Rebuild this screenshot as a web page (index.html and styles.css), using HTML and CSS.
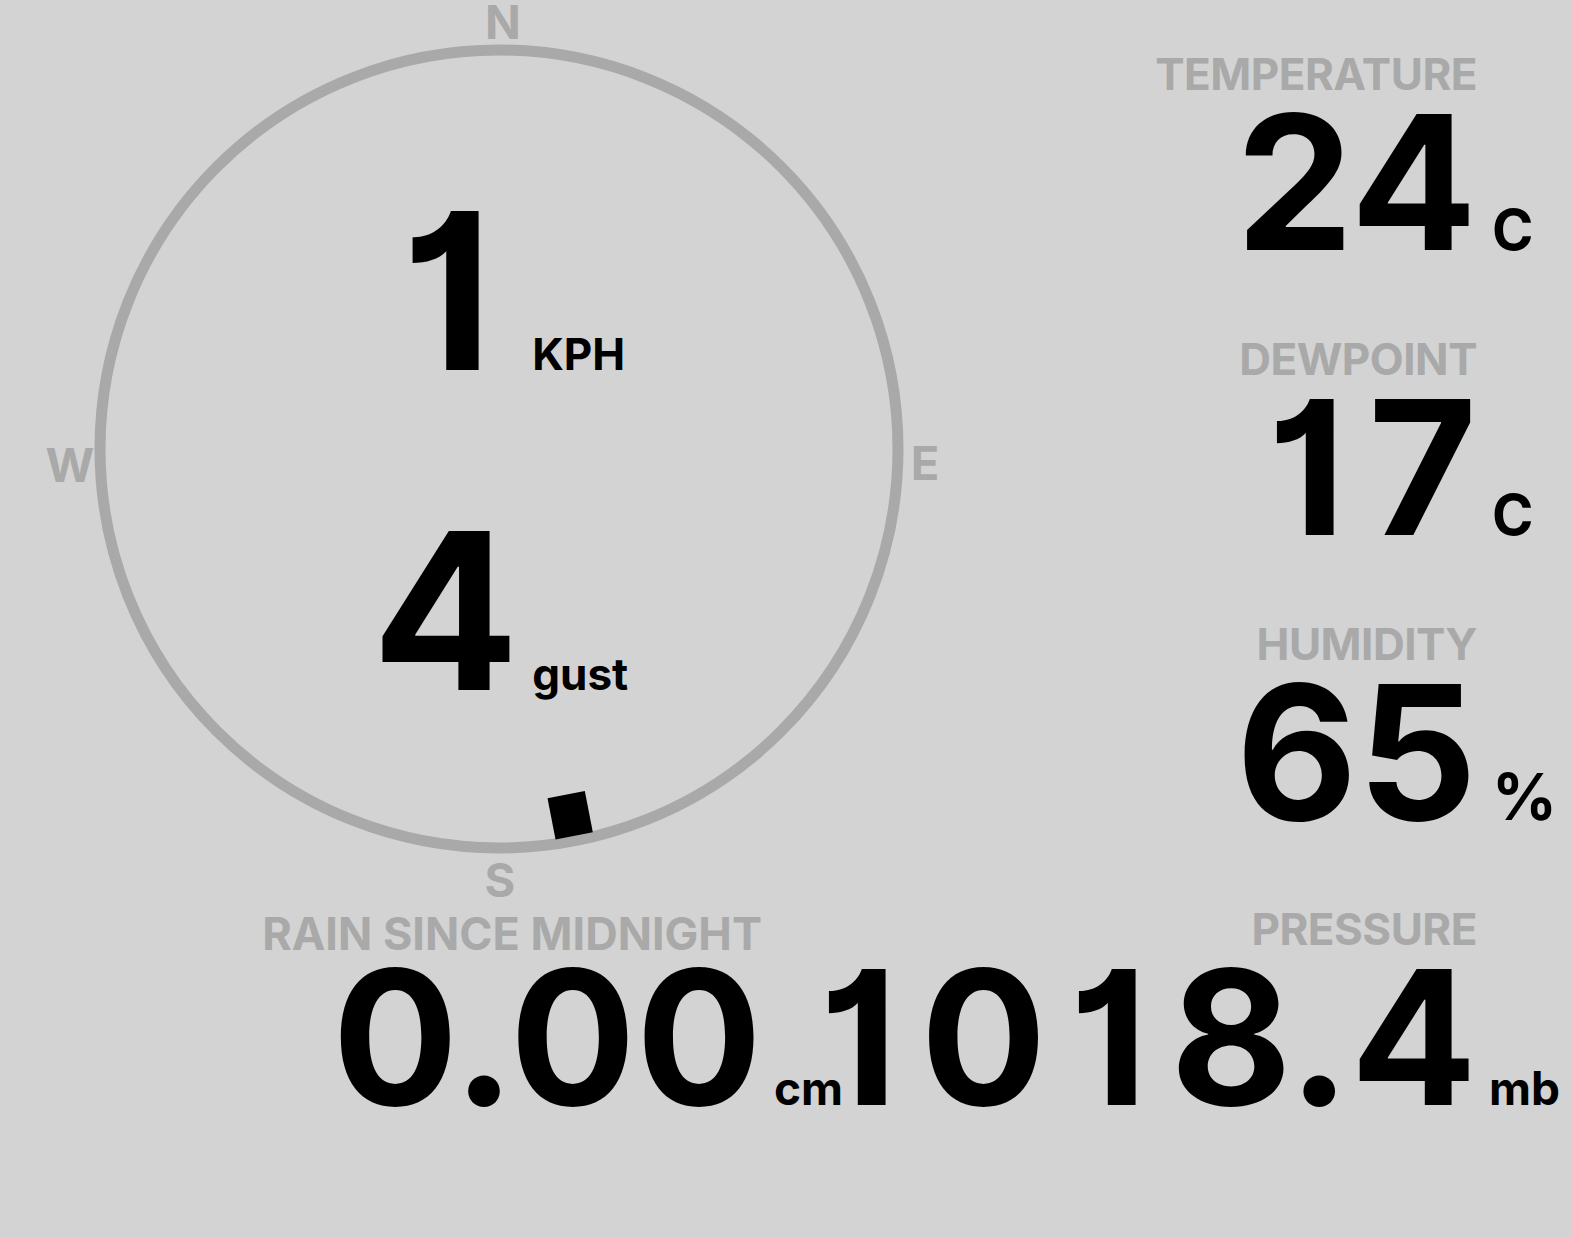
FILE: index.html
```html
<!DOCTYPE html>
<html lang="en">
<head>
<meta charset="utf-8">
<title>Weather station</title>
<link rel="stylesheet" href="styles.css">
</head>
<body>
<main class="dash">
  <section class="left">
    <div class="compass">
      <svg class="dial" width="1000" height="912" viewBox="0 0 1000 912" aria-label="Wind direction">
        <circle class="ring" cx="499" cy="449" r="399"/>
        <rect class="needle" x="-19" y="352" width="38" height="42" transform="translate(499 449) rotate(-11)"/>
        <text x="503" y="39">N</text>
        <text x="500" y="897">S</text>
        <text x="70" y="482">W</text>
        <text x="925" y="480">E</text>
      </svg>
      <div class="speeds">
        <div class="speed"><span class="speed-num"><span class="one">1</span></span><span class="speed-unit">KPH</span></div>
        <div class="speed"><span class="speed-num">4</span><span class="speed-unit">gust</span></div>
      </div>
    </div>
    <div class="stat stat-rain">
      <div class="label">RAIN SINCE MIDNIGHT</div>
      <div class="num">0.00</div>
      <div class="unit unit-sm">cm</div>
    </div>
  </section>
  <section class="right">
    <div class="stat">
      <div class="label">TEMPERATURE</div>
      <div class="num">24</div>
      <div class="unit">C</div>
    </div>
    <div class="stat">
      <div class="label">DEWPOINT</div>
      <div class="num"><span class="one">1</span>7</div>
      <div class="unit">C</div>
    </div>
    <div class="stat">
      <div class="label">HUMIDITY</div>
      <div class="num">65</div>
      <div class="unit unit-pct">%</div>
    </div>
    <div class="stat">
      <div class="label">PRESSURE</div>
      <div class="num"><span class="one">1</span>0<span class="one">1</span>8.4</div>
      <div class="unit unit-sm">mb</div>
    </div>
  </section>
</main>
</body>
</html>
```

FILE: styles.css
```css
html, body {
  margin: 0;
  padding: 0;
}

body {
  background: #d3d3d3;
  color: #000;
  font-family: Inter, "Liberation Sans", sans-serif;
  font-weight: 700;
  width: 1571px;
  height: 1237px;
  overflow: hidden;
}

.dash {
  display: grid;
  grid-template-columns: 1000px 571px;
}

/* ---------- compass ---------- */
.compass {
  position: relative;
  height: 912px;
}

.dial {
  position: absolute;
  left: 0;
  top: 0;
}

.ring {
  fill: none;
  stroke: #a9a9a9;
  stroke-width: 11;
}

.needle {
  fill: #000;
}

.dial text {
  font-family: Inter, "Liberation Sans", sans-serif;
  font-weight: 700;
  font-size: 47px;
  fill: #a9a9a9;
  text-anchor: middle;
}

.speeds {
  position: relative;
  width: 1000px;
  display: flex;
  flex-direction: column;
  align-items: center;
  padding-top: 183px;
  gap: 104px;
}

.speed {
  display: flex;
  align-items: baseline;
}

.speed-num {
  font-size: 218px;
  line-height: 216px;
  font-feature-settings: "cv01" 1;
}

.speed-unit {
  font-size: 44px;
  line-height: 44px;
  margin-left: 13px;
}

/* tabular-width "1" without the foot serif */
.one {
  padding: 0 0.12em;
}

/* ---------- stats ---------- */
.right {
  padding-top: 52px;
}

.stat {
  display: grid;
  grid-template-columns: minmax(0, 1fr) 94px;
  align-items: baseline;
}

.right .stat {
  margin-bottom: 69px;
}

.label {
  grid-column: 1;
  grid-row: 1;
  justify-self: end;
  font-size: 44px;
  line-height: 44px;
  letter-spacing: -0.5px;
  color: #a9a9a9;
  white-space: nowrap;
}

.num {
  grid-column: 1;
  grid-row: 2;
  justify-self: end;
  font-size: 187px;
  line-height: 172px;
  font-feature-settings: "cv01" 1;
  white-space: nowrap;
}

.unit {
  grid-column: 2;
  grid-row: 2;
  font-size: 56px;
  line-height: 56px;
  padding-left: 15px;
}

.unit-pct {
  font-size: 64px;
  line-height: 56px;
  padding-left: 15px;
}

.unit-sm {
  font-size: 46px;
  line-height: 46px;
  padding-left: 12px;
}

.stat-rain {
  grid-template-columns: 762px auto;
}

.stat-rain .label {
  font-size: 45px;
  letter-spacing: 0;
}

.stat-rain .num {
  line-height: 162px;
}
```
